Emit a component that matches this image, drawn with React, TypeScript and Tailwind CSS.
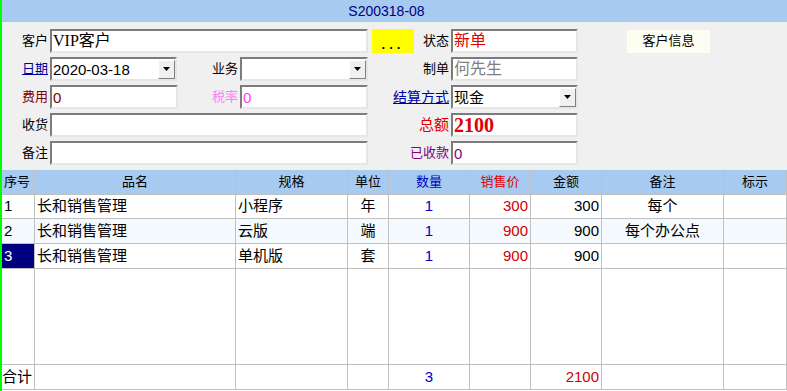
const FONT = "font-['Liberation_Sans','Noto_Sans_CJK_SC',sans-serif]";

const inputCls =
  'h-6 bg-white border-2 border-t-[#7c7c7c] border-l-[#7c7c7c] border-r-[#e6e6e6] border-b-[#e6e6e6] flex items-center px-px text-[15px] leading-none overflow-hidden';

const Label = ({ text, w, className = '' }: { text: string; w: number; className?: string }) => (
  <div className={`shrink-0 text-right text-[13px] pr-0.5 ${className}`} style={{ width: w }}>
    {text}
  </div>
);

const Field = ({ w, children, className = '' }: { w: number; children?: React.ReactNode; className?: string }) => (
  <div className={`${inputCls} shrink-0 ${className}`} style={{ width: w }}>
    {children}
  </div>
);

const Select = ({ w, children }: { w: number; children?: React.ReactNode }) => (
  <div className={`${inputCls} shrink-0 justify-between pr-0`} style={{ width: w }}>
    <span>{children}</span>
    <div className="w-[17px] h-[19px] bg-[#f0f0f0] border border-t-white border-l-white border-r-[#808080] border-b-[#808080] flex items-center justify-center">
      <svg width="7" height="4" viewBox="0 0 7 4">
        <path d="M0 0h7L3.5 4z" fill="#000" />
      </svg>
    </div>
  </div>
);

const COLS = [33, 201, 112, 41, 81, 61, 71, 122, 63];
const gridCls = 'grid grid-cols-[33px_201px_112px_41px_81px_61px_71px_122px_63px]';

const HEAD = [
  { t: '序号', c: 'justify-start pl-0.5' },
  { t: '品名', c: 'justify-center' },
  { t: '规格', c: 'justify-center' },
  { t: '单位', c: 'justify-center' },
  { t: '数量', c: 'justify-center text-[#0000c0]' },
  { t: '销售价', c: 'justify-center text-[#e00000]' },
  { t: '金额', c: 'justify-center' },
  { t: '备注', c: 'justify-center' },
  { t: '标示', c: 'justify-center' },
];

const ROWS = [
  { no: '1', name: '长和销售管理', spec: '小程序', unit: '年', qty: '1', price: '300', amt: '300', note: '每个', h: 'h-[24px]', bg: 'bg-white' },
  { no: '2', name: '长和销售管理', spec: '云版', unit: '端', qty: '1', price: '900', amt: '900', note: '每个办公点', h: 'h-[25px]', bg: 'bg-[#f3f9fd]' },
  { no: '3', name: '长和销售管理', spec: '单机版', unit: '套', qty: '1', price: '900', amt: '900', note: '', h: 'h-[25px]', bg: 'bg-white' },
];

const cell = 'border-r border-b border-[#c0c0c0] flex items-center overflow-hidden whitespace-nowrap';

export default function App() {
  return (
    <div className={`w-[787px] h-[391px] bg-[#f0f0f0] flex ${FONT} text-black overflow-hidden`}>
      <div className="w-[2px] shrink-0 bg-[#00ff00]" />
      <div className="flex-1 flex flex-col">
        <div className="h-[22px] bg-[#a6caf0] flex items-center justify-center text-[14px] text-[#000080] pr-4">
          S200318-08
        </div>

        <div className="flex flex-col gap-1 pt-[7px]">
          <div className="flex items-center">
            <Label text="客户" w={48} />
            <Field w={318}>
              <span className="font-['Liberation_Serif','Noto_Sans_CJK_SC',serif] text-[16px]">VIP客户</span>
            </Field>
            <div className="ml-1 w-[42px] h-6 bg-[#ffff00] flex items-end justify-center pb-0.5 text-[13px] font-bold tracking-[4px] leading-none">
              ...
            </div>
            <Label text="状态" w={37} />
            <Field w={127} className="text-[#e00000] text-[16px]">新单</Field>
            <div className="ml-[49px] w-[83px] h-[23px] bg-[#fdfdf2] flex items-center justify-center text-[13px]">
              客户信息
            </div>
          </div>

          <div className="flex items-center">
            <Label text="日期" w={48} className="text-[#0000a0] underline" />
            <Select w={127}>2020-03-18</Select>
            <Label text="业务" w={63} />
            <Select w={128} />
            <Label text="制单" w={83} />
            <Field w={127} className="text-[#808080] text-[16px]">何先生</Field>
          </div>

          <div className="flex items-center">
            <Label text="费用" w={48} className="text-[#800000]" />
            <Field w={128} className="text-[#800000] text-[14px]">0</Field>
            <Label text="税率" w={62} className="text-[#ff80ff]" />
            <Field w={128} className="text-[#ff40ff] text-[14px]">0</Field>
            <Label text="结算方式" w={83} className="text-[#0000a0] underline text-[14px]" />
            <Select w={127}>现金</Select>
          </div>

          <div className="flex items-center">
            <Label text="收货" w={48} />
            <Field w={318} />
            <Label text="总额" w={83} className="text-[#e00000] text-[15px]" />
            <Field w={127} className="text-[#e00000] font-bold text-[20px] font-['Liberation_Serif',serif]">
              2100
            </Field>
          </div>

          <div className="flex items-center">
            <Label text="备注" w={48} />
            <Field w={318} />
            <Label text="已收款" w={83} className="text-[#800080]" />
            <Field w={127} className="text-[#800080] text-[14px]">0</Field>
          </div>
        </div>

        <div className="mt-[5px] bg-white flex-1 flex flex-col text-[15px]">
          <div className={`${gridCls} h-[25px] bg-[#a6caf0] text-[13px]`}>
            {HEAD.map((h) => (
              <div key={h.t} className={`border-r border-b border-[#c0c0c0] flex items-center ${h.c}`}>
                {h.t}
              </div>
            ))}
          </div>

          {ROWS.map((r, i) => (
            <div key={r.no} className={`${gridCls} ${r.h} ${r.bg}`}>
              <div className={`${cell} pl-0.5 ${i === 2 ? 'bg-[#000080] text-white' : ''}`}>{r.no}</div>
              <div className={`${cell} pl-0.5`}>{r.name}</div>
              <div className={`${cell} pl-0.5`}>{r.spec}</div>
              <div className={`${cell} justify-center`}>{r.unit}</div>
              <div className={`${cell} justify-center text-[#0000c0]`}>{r.qty}</div>
              <div className={`${cell} justify-end pr-0.5 text-[#d00000]`}>{r.price}</div>
              <div className={`${cell} justify-end pr-0.5`}>{r.amt}</div>
              <div className={`${cell} justify-center`}>{r.note}</div>
              <div className={cell} />
            </div>
          ))}

          <div className={`${gridCls} h-[96px]`}>
            {COLS.map((_, i) => (
              <div key={i} className="border-r border-b border-[#c0c0c0]" />
            ))}
          </div>

          <div className={`${gridCls} h-[25px]`}>
            <div className={`${cell} pl-0`}>合计</div>
            <div className={cell} />
            <div className={cell} />
            <div className={cell} />
            <div className={`${cell} justify-center text-[#0000c0]`}>3</div>
            <div className={cell} />
            <div className={`${cell} justify-end pr-0.5 text-[#d00000]`}>2100</div>
            <div className={cell} />
            <div className={cell} />
          </div>
        </div>
      </div>
    </div>
  );
}
